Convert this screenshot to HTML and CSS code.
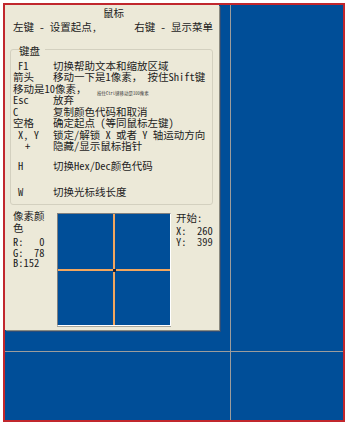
FILE: index.html
```html
<!DOCTYPE html>
<html lang="zh-CN">

<head>
    <meta charset="UTF-8">
    <meta name="viewport" content="width=device-width, initial-scale=1.0">
    <title>鼠标</title>
    <link rel="stylesheet" href="styles.css">
</head>

<body>
    <div class="screen">
        <div class="panel">
            <div class="title">鼠标</div>
            <div class="mouse-row">
                <span>左键 - 设置起点,</span>
                <span>右键 - 显示菜单</span>
            </div>

            <div class="group">
                <div class="group-title">键盘</div>
                <div class="row"><span class="key indent">F1</span><span>切换帮助文本和缩放区域</span></div>
                <div class="row"><span class="key">箭头</span><span>移动一下是1像素， 按住Shift键</span></div>
                <div class="row wide">移动是10像素，</div>
                <div class="ghost">按住Ctrl键移动是100像素</div>
                <div class="row"><span class="key">Esc</span><span>放弃</span></div>
                <div class="row"><span class="key">C</span><span>复制颜色代码和取消</span></div>
                <div class="row"><span class="key">空格</span><span>确定起点 (等同鼠标左键)</span></div>
                <div class="row"><span class="key indent">X, Y</span><span>锁定/解锁 X 或者 Y 轴运动方向</span></div>
                <div class="row"><span class="key indent-more">+</span><span>隐藏/显示鼠标指针</span></div>
                <div class="row gap-h"><span class="key indent">H</span><span>切换Hex/Dec颜色代码</span></div>
                <div class="row gap-w"><span class="key indent">W</span><span>切换光标线长度</span></div>
            </div>

            <div class="bottom">
                <div class="color-info">
                    <div class="label">像素颜色</div>
                    <div class="values">R:   0
G:  78
B:152</div>
                </div>
                <div class="magnifier">
                    <div class="cell"></div>
                    <div class="cell"></div>
                    <div class="cell"></div>
                    <div class="cell"></div>
                    <div class="center-dot"></div>
                </div>
                <div class="start-info">
                    <div>开始:</div>
                    <div class="values">X:  260
Y:  399</div>
                </div>
            </div>
        </div>

        <!-- cursor crosshair drawn over the screen -->
        <div class="cross-v"></div>
        <div class="cross-h"></div>
    </div>
</body>

</html>
```

FILE: styles.css
```css
body {
    margin: 0;
    background: #fff;
    font-family: "Noto Sans Mono CJK SC", "Noto Sans CJK SC", sans-serif;
    font-size: 10.5px;
    line-height: 11.5px;
    color: #1c1c1c;
}

.screen {
    position: relative;
    box-sizing: border-box;
    width: 342px;
    height: 419px;
    margin: 3px;
    border: 2px solid #c1272d;
    background: #004e98;
}

.panel {
    box-sizing: border-box;
    width: 214px;
    padding: 2px 6px 4px 5px;
    background: #ece9d8;
    box-shadow: 1px 1px 0 #8a8a80, 2px 2px 0 #2b4d7a;
}

.title {
    text-align: center;
    padding-left: 4px;
}

.mouse-row {
    display: flex;
    justify-content: space-between;
    margin-top: 2px;
    padding: 0 0 0 3px;
}

.group {
    margin-top: 17px;
    padding: 5px 0 7px 2px;
    border: 1px solid #d3d0bf;
    border-radius: 3px;
}

.group-title {
    margin: -10px 0 3px 6px;
    width: 26px;
    background: #ece9d8;
}

.row {
    display: flex;
    white-space: nowrap;
}

.key {
    width: 40px;
    flex: none;
}

.indent {
    padding-left: 5px;
    box-sizing: border-box;
}

.indent-more {
    padding-left: 12px;
    box-sizing: border-box;
}

.ghost {
    height: 0;
    line-height: 0;
    padding-left: 84px;
    font-size: 4.5px;
    color: #3a3a3a;
    white-space: nowrap;
    transform: translateY(-1px);
}

.gap-h {
    margin-top: 8px;
}

.gap-w {
    margin-top: 14.5px;
}

.bottom {
    display: flex;
    margin-top: 4px;
    padding-left: 3px;
}

.color-info {
    width: 44px;
    flex: none;
    padding-top: 1px;
}

.label {
    width: 36px;
}

.values {
    white-space: pre;
    line-height: 10.5px;
    margin-top: 4px;
}

.magnifier {
    position: relative;
    box-sizing: border-box;
    width: 114px;
    height: 113px;
    margin-top: 4px;
    display: grid;
    grid-template-columns: 1fr 1fr;
    grid-template-rows: 1fr 1fr;
    gap: 2px;
    background: #f2a65e;
    border: 1px solid;
    border-color: #7f7f7f #fff #fff #7f7f7f;
    box-shadow: 0 1px 0 #a7a59a;
}

.cell {
    background: #004e98;
}

.center-dot {
    position: absolute;
    left: 55px;
    top: 55px;
    width: 3px;
    height: 3px;
    background: #1d2238;
}

.start-info {
    margin-left: 5px;
    padding-top: 3px;
}

.start-info .values {
    margin-top: 1px;
    line-height: 11px;
}

.cross-v {
    position: absolute;
    left: 225px;
    top: 0;
    bottom: 0;
    width: 1px;
    background: #9c9c9c;
}

.cross-h {
    position: absolute;
    top: 346px;
    left: 0;
    right: 0;
    height: 1px;
    background: #9c9c9c;
}
```
